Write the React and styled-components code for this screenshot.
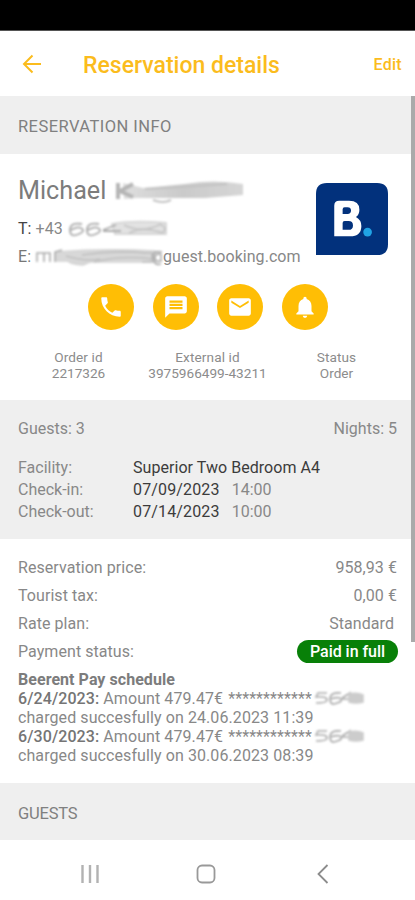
import React from "react";
import styled, { createGlobalStyle } from "styled-components";

const GlobalStyle = createGlobalStyle`
  * { box-sizing: border-box; }
  html, body { margin: 0; background: #fff; overflow: hidden; }
  body { font-family: Roboto, "Liberation Sans", sans-serif; color: #888; }
`;

const Screen = styled.div`
  position: relative;
  width: 415px;
  height: 900px;
  display: flex;
  flex-direction: column;
  overflow: hidden;
  background: #fff;
`;
const StatusBar = styled.div`
  height: 31px;
  flex: none;
  background: #000;
  border-bottom: 1px solid #555;
`;
const Header = styled.header`
  height: 65px;
  flex: none;
  display: flex;
  align-items: center;
  padding: 2px 13px 0 20px;
  color: #fbbc1d;
`;
const BackIcon = styled.svg`
  width: 24px;
  height: 24px;
  margin-top: -2px;
`;
const Title = styled.h1`
  margin: 2px auto 0 39px;
  font-size: 23px;
  line-height: 30px;
  font-weight: 500;
  white-space: nowrap;
`;
const EditLink = styled.span`
  font-size: 16px;
  letter-spacing: 0.3px;
  font-weight: 500;
`;
const SectionTitle = styled.h2`
  margin: 0;
  flex: none;
  height: ${(p) => p.$height}px;
  display: flex;
  align-items: center;
  padding: 3px 18px 0;
  background: #efefef;
  font-size: 16.5px;
  letter-spacing: ${(p) => p.$spacing}px;
  font-weight: 400;
  color: #808080;
`;
const GuestCard = styled.section`
  height: 246px;
  flex: none;
  padding-top: 22px;
`;
const GuestTop = styled.div`
  display: flex;
  justify-content: space-between;
  height: 108px;
  padding: 0 27px 0 18px;
`;
const ContactLines = styled.div`
  display: flex;
  flex-direction: column;
  white-space: nowrap;
`;
const Name = styled.div`
  display: flex;
  gap: 8px;
  height: 39px;
  padding-top: 1px;
  font-size: 25.2px;
  line-height: 28px;
  color: #7c7c7c;
`;
const Contact = styled.div`
  display: flex;
  height: 28px;
  font-size: 16px;
  line-height: 28px;
  letter-spacing: 0.04px;
`;
const ContactLabel = styled.span`
  margin-right: 4px;
  color: ${(p) => (p.$dark ? "#444" : "#777")};
`;
const Smear = styled.svg`
  flex: none;
  width: ${(p) => p.$w}px;
  height: 28px;
  margin-left: ${(p) => p.$left || 0}px;
  overflow: visible;
`;
const BrandLogo = styled.svg`
  flex: none;
  width: 72px;
  height: 72px;
  margin-top: 7px;
`;
const Actions = styled.div`
  display: flex;
  gap: 18.5px;
  padding-left: 88px;
`;
const ActionButton = styled.button`
  width: 46px;
  height: 46px;
  padding: 0;
  border: 0;
  border-radius: 50%;
  background: #ffbe05;
  display: grid;
  place-items: center;
  svg { width: 26px; height: 26px; fill: #fff; }
`;
const Ids = styled.div`
  display: grid;
  grid-template-columns: 129px 129px 129px;
  padding: 19px 0 0 14px;
  font-size: 13.6px;
  line-height: 16px;
  text-align: center;
  color: #8c8c8c;
  white-space: nowrap;
`;
const IdLabel = styled.div`
  letter-spacing: 0.1px;
`;
const StayPanel = styled.section`
  height: 139px;
  flex: none;
  padding: 18px 18px 0;
  background: #efefef;
  font-size: 16px;
`;
const StaySummary = styled.div`
  display: flex;
  justify-content: space-between;
  line-height: 22px;
  margin-bottom: 17px;
`;
const StayRow = styled.div`
  display: grid;
  grid-template-columns: 115px auto 1fr;
  line-height: 22px;
`;
const StayValue = styled.span`
  color: #3c3c3c;
  letter-spacing: ${(p) => p.$spacing || 0.05}px;
  margin-right: 12px;
`;
const PaymentPanel = styled.section`
  height: 244px;
  flex: none;
  padding: 15px 18px 0 18px;
  font-size: 16px;
`;
const PriceRow = styled.div`
  display: flex;
  justify-content: space-between;
  align-items: center;
  height: 27.8px;
  letter-spacing: 0.06px;
`;
const PriceValue = styled.span`
  margin-right: ${(p) => p.$inset || 0}px;
`;
const PaidBadge = styled.span`
  width: 101px;
  height: 23px;
  margin-right: -1px;
  border-radius: 12px;
  background: #088008;
  color: #fff;
  font-weight: 500;
  letter-spacing: -0.05px;
  line-height: 23px;
  text-align: center;
`;
const Schedule = styled.div`
  margin-top: 5.3px;
  line-height: 19px;
  white-space: nowrap;
`;
const ScheduleTitle = styled.div`
  font-weight: 700;
  letter-spacing: 0.05px;
  color: #7c7c7c;
`;
const ScheduleLine = styled.div`
  display: flex;
  height: 19px;
  letter-spacing: 0.09px;
`;
const ScheduleDate = styled.span`
  font-weight: 500;
  color: #757575;
  margin-right: 4px;
`;
const Stars = styled.span`
  margin-left: 5px;
  letter-spacing: 0.1px;
`;
const NavBar = styled.nav`
  height: 60px;
  flex: none;
  display: flex;
  align-items: center;
  padding: 8px 0 0 78px;
  gap: 92px;
`;
const NavIcon = styled.svg`
  width: 24px;
  height: 24px;
  fill: none;
  stroke: ${(p) => p.$tone};
  stroke-width: ${(p) => p.$weight || 1.8};
`;
const ScrollThumb = styled.div`
  position: absolute;
  top: 96px;
  right: 0;
  width: 4.5px;
  height: 546px;
  background: #aaa;
`;

const CardSmear = () => (
  <Smear viewBox="0 0 54 28" $w={54} $left={1}>
    <g filter="url(#soft)" fill="none" stroke="#aaa" strokeWidth="1.6">
      <path d="M14 4H5L3 8q11-1 11 3 0 3-11 3M28 4Q17 3 17 10t7 4q7-2 3-5-4-1-9 1M29 9l8-5v9M29 10h10" />
      <path d="M36 5q8-2 14 1v7q-7 2-14 0z" fill="#ccc" stroke="#ccc" />
    </g>
  </Smear>
);

export default function App() {
  return (
    <>
      <GlobalStyle />
      <Screen>
        <StatusBar />
        <Header>
          <BackIcon viewBox="0 0 24 24" fill="none" stroke="currentColor" strokeWidth="2">
            <path d="M21 12H4M12.5 3.5 4 12l8.5 8.5" />
          </BackIcon>
          <Title>Reservation details</Title>
          <EditLink>Edit</EditLink>
        </Header>
        <SectionTitle $height={58} $spacing={0.45}>RESERVATION INFO</SectionTitle>
        <GuestCard>
          <GuestTop>
            <ContactLines>
              <Name>
                Michael
                <Smear viewBox="0 0 128 28" $w={128} $left={1}>
                  <defs>
                    <filter id="soft" x="-10%" y="-30%" width="120%" height="160%">
                      <feGaussianBlur stdDeviation="0.9" />
                    </filter>
                    <linearGradient id="tail">
                      <stop stopColor="#dedede" />
                      <stop offset=".5" stopColor="#cacaca" />
                      <stop offset="1" stopColor="#d6d6d6" />
                    </linearGradient>
                  </defs>
                  <g filter="url(#soft)">
                    <path d="M8 6 28 11 70 7Q98 2 128 7v11L90 21H22L9 22z" fill="url(#tail)" />
                    <path d="M3 6v16M18 7 5 14l13 6" fill="none" stroke="#b5b5b5" strokeWidth="4" />
                    <path d="M30 12Q70 10 112 7M38 23q10 4 18 0" fill="none" stroke="#c2c2c2" strokeWidth="2" />
                  </g>
                </Smear>
              </Name>
              <Contact>
                <ContactLabel $dark>T:</ContactLabel>+43
                <Smear viewBox="0 0 99 28" $w={99} $left={6}>
                  <g filter="url(#soft)" fill="none" stroke="#aaa" strokeWidth="1.8">
                    <path d="M43 9Q65 5 97 8v11H46z" fill="#e2e2e2" stroke="#d6d6d6" />
                    <path d="M13 9Q1 7 1 15t9 4q7-3 2-6-4-2-10 2M30 9Q18 7 18 15t9 4q7-3 2-6-4-2-10 2M34 15l13-5M34 16h18" />
                    <path d="M55 10q18 9 37-1M60 18q14-7 34 0M90 9q10 4 3 9" stroke="#c6c6c6" />
                  </g>
                </Smear>
              </Contact>
              <Contact>
                <ContactLabel>E:</ContactLabel>
                <Smear viewBox="0 0 127 28" $w={127} $left={1}>
                  <g filter="url(#soft)" fill="none" stroke="#aaa" strokeWidth="1.6">
                    <path d="M20 9Q70 5 119 8v11H54l-7 3q-13-1-15-4H20z" fill="#d8d8d8" stroke="#d4d4d4" />
                    <path d="M1 19V10h13v9M8 10v9M19 19V9l7-2" />
                    <path d="M30 13q20 6 34 3M46 12q31-5 65-2M58 19q29-7 58-3M106 10h10v9h-10" stroke="#bfbfbf" />
                    <path d="M126 9q-10-2-9 6t8 6M125 11v7q-6 1-6-3 0-5 6-4" />
                  </g>
                </Smear>
                guest.booking.com
              </Contact>
            </ContactLines>
            <BrandLogo viewBox="0 0 73 73">
              <path d="M0 73V11Q0 0 11 0h51q11 0 11 11v51q0 11-11 11z" fill="#02317c" />
              <path
                fill="#fff"
                fillRule="evenodd"
                d="M18.500 54V23q0-5 5-5h10q10.500 0 10.500 9 0 5-3.500 7.500 5.500 3 5.500 9 0 10.500-11.500 10.500H18.500zM27 31.500h5q3.500 0 3.500-3.500t-3.500-3.500h-3q-2 0-2 2zM27 47.500h6q4.500 0 4.500-4.500t-4.500-4.500h-4q-2 0-2 2z"
              />
              <circle cx="52.300" cy="49.800" r="4.400" fill="#20a3e5" />
            </BrandLogo>
          </GuestTop>
          <Actions>
            <ActionButton aria-label="Call">
              <svg viewBox="0 0 24 24">
                <path d="M6.620 10.790c1.440 2.830 3.760 5.140 6.590 6.590l2.200-2.200c.27-.27.67-.36 1.020-.24 1.120.37 2.330.57 3.570.57.55 0 1 .45 1 1V20c0 .55-.45 1-1 1-9.390 0-17-7.610-17-17 0-.55.45-1 1-1h3.500c.55 0 1 .45 1 1 0 1.250.2 2.450.57 3.570.11.35.03.74-.25 1.020l-2.200 2.200z" />
              </svg>
            </ActionButton>
            <ActionButton aria-label="Message">
              <svg viewBox="0 0 24 24">
                <path d="M20 2H4c-1.100 0-2 .9-2 2v18l4-4h14c1.100 0 2-.9 2-2V4c0-1.100-.9-2-2-2zM6 6h12v2H6V6zm12 8H6v-2h12v2zm0-3H6V9h12v2z" />
              </svg>
            </ActionButton>
            <ActionButton aria-label="Email">
              <svg viewBox="0 0 24 24">
                <path d="M20 4H4c-1.100 0-2 .9-2 2v12c0 1.100.9 2 2 2h16c1.100 0 2-.9 2-2V6c0-1.100-.9-2-2-2zm0 4-8 5-8-5V6l8 5 8-5v2z" />
              </svg>
            </ActionButton>
            <ActionButton aria-label="Notify">
              <svg viewBox="0 0 24 24">
                <path d="M12 22c1.100 0 2-.9 2-2h-4c0 1.100.9 2 2 2zm6-6v-5c0-3.070-1.640-5.640-4.500-6.320V4c0-.83-.67-1.500-1.500-1.500s-1.500.67-1.500 1.500v.68C7.630 5.360 6 7.920 6 11v5l-2 2v1h16v-1l-2-2z" />
              </svg>
            </ActionButton>
          </Actions>
          <Ids>
            <div><IdLabel>Order id</IdLabel>2217326</div>
            <div><IdLabel>External id</IdLabel>3975966499-43211</div>
            <div><IdLabel>Status</IdLabel>Order</div>
          </Ids>
        </GuestCard>
        <StayPanel>
          <StaySummary><span>Guests: 3</span><span>Nights: 5</span></StaySummary>
          <StayRow><span>Facility:</span><StayValue>Superior Two Bedroom A4</StayValue></StayRow>
          <StayRow><span>Check-in:</span><StayValue $spacing={0.15}>07/09/2023</StayValue><span>14:00</span></StayRow>
          <StayRow><span>Check-out:</span><StayValue $spacing={0.15}>07/14/2023</StayValue><span>10:00</span></StayRow>
        </StayPanel>
        <PaymentPanel>
          <PriceRow><span>Reservation price:</span><PriceValue>958,93 €</PriceValue></PriceRow>
          <PriceRow><span>Tourist tax:</span><PriceValue>0,00 €</PriceValue></PriceRow>
          <PriceRow><span>Rate plan:</span><PriceValue $inset={3}>Standard</PriceValue></PriceRow>
          <PriceRow><span>Payment status:</span><PaidBadge>Paid in full</PaidBadge></PriceRow>
          <Schedule>
            <ScheduleTitle>Beerent Pay schedule</ScheduleTitle>
            <ScheduleLine>
              <ScheduleDate>6/24/2023:</ScheduleDate>Amount 479.47€<Stars>************</Stars><CardSmear />
            </ScheduleLine>
            <ScheduleLine>charged succesfully on 24.06.2023 11:39</ScheduleLine>
            <ScheduleLine>
              <ScheduleDate>6/30/2023:</ScheduleDate>Amount 479.47€<Stars>************</Stars><CardSmear />
            </ScheduleLine>
            <ScheduleLine>charged succesfully on 30.06.2023 08:39</ScheduleLine>
          </Schedule>
        </PaymentPanel>
        <SectionTitle $height={57} $spacing={-0.2}>GUESTS</SectionTitle>
        <NavBar>
          <NavIcon viewBox="0 0 24 24" $tone="#b2b2b2" $weight={2.4}><path d="M4.500 3v18M12 3v18M19.500 3v18" /></NavIcon>
          <NavIcon viewBox="0 0 24 24" $tone="#999"><rect x="3.500" y="3.500" width="17" height="17" rx="4.500" /></NavIcon>
          <NavIcon viewBox="0 0 24 24" $tone="#8c8c8c"><path d="M17.500 3 8.500 12l9 9" /></NavIcon>
        </NavBar>
        <ScrollThumb />
      </Screen>
    </>
  );
}
